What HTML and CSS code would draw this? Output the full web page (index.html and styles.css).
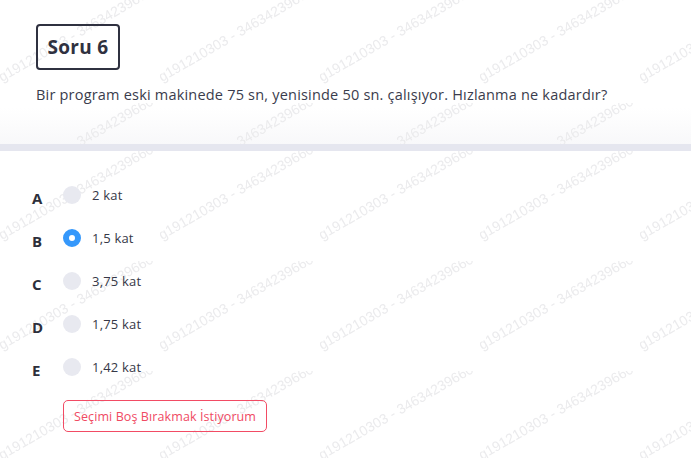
FILE: index.html
```html
<!DOCTYPE html>
<html lang="tr">
<head>
<meta charset="utf-8">
<title>Soru 6</title>
<link rel="stylesheet" href="styles.css">
</head>
<body>
<div class="page">
  <section class="head">
    <svg class="wm" aria-hidden="true">
      <defs>
        <pattern id="wm1" patternUnits="userSpaceOnUse" x="0" y="-7" width="160" height="110">
          <text x="2" y="89" transform="rotate(-30 2 89)" class="wm-text">g191210303 - 34634239660</text>
        </pattern>
      </defs>
      <rect width="100%" height="100%" fill="url(#wm1)"/>
    </svg>
    <div class="head-inner">
      <div class="title">Soru 6</div>
      <p class="question">Bir program eski makinede 75 sn, yenisinde 50 sn. çalışıyor. Hızlanma ne kadardır?</p>
    </div>
  </section>
  <div class="divider"></div>
  <section class="options">
    <svg class="wm" aria-hidden="true">
      <defs>
        <pattern id="wm2" patternUnits="userSpaceOnUse" x="0" y="0" width="160" height="110">
          <text x="2" y="89" transform="rotate(-30 2 89)" class="wm-text">g191210303 - 34634239660</text>
        </pattern>
      </defs>
      <rect width="100%" height="100%" fill="url(#wm2)"/>
    </svg>
    <div class="options-inner">
      <ul class="opts">
        <li class="opt"><span class="letter">A</span><span class="radio"></span><span class="label">2 kat</span></li>
        <li class="opt"><span class="letter">B</span><span class="radio checked"></span><span class="label">1,5 kat</span></li>
        <li class="opt"><span class="letter">C</span><span class="radio"></span><span class="label">3,75 kat</span></li>
        <li class="opt"><span class="letter">D</span><span class="radio"></span><span class="label">1,75 kat</span></li>
        <li class="opt"><span class="letter">E</span><span class="radio"></span><span class="label">1,42 kat</span></li>
      </ul>
      <button class="skip" type="button">Seçimi Boş Bırakmak İstiyorum</button>
    </div>
  </section>
</div>
</body>
</html>
```
FILE: styles.css
```css
html, body {
  margin: 0;
  padding: 0;
  background: #ffffff;
}

body {
  font-family: "Open Sans", "Noto Sans", sans-serif;
  color: #363847;
  width: 691px;
  height: 458px;
  overflow: hidden;
}

.page {
  display: flex;
  flex-direction: column;
}

.head {
  position: relative;
  height: 144px;
  background: linear-gradient(to bottom, #ffffff 0%, #ffffff 75%, #f8f8fa 100%);
}

.wm {
  position: absolute;
  left: 0;
  top: 0;
  width: 100%;
  height: 100%;
  z-index: 0;
}

.wm-text {
  font-family: "Liberation Sans", Arial, sans-serif;
  font-size: 14px;
  fill: #ebebed;
}

.head-inner {
  position: relative;
  z-index: 1;
  padding: 24px 0 0 36px;
  display: flex;
  flex-direction: column;
  align-items: flex-start;
}

.title {
  box-sizing: border-box;
  width: 84px;
  height: 46px;
  border: 2px solid #2f3140;
  border-radius: 4px;
  display: flex;
  align-items: center;
  justify-content: center;
  font-size: 19px;
  font-weight: 700;
  letter-spacing: 0.3px;
  color: #2f3140;
}

.question {
  margin: 14px 0 0;
  font-size: 14.5px;
  line-height: 21px;
  letter-spacing: 0.2px;
  color: #3a3c4c;
}

.divider {
  height: 7px;
  background: #e5e6ef;
}

.options {
  position: relative;
  height: 307px;
}

.options-inner {
  position: relative;
  z-index: 1;
  padding: 22px 0 0 32px;
}

.opts {
  list-style: none;
  margin: 0;
  padding: 0;
}

.opt {
  display: flex;
  align-items: center;
  height: 43px;
}

.letter {
  width: 31px;
  margin-top: 6px;
  font-size: 15px;
  font-weight: 700;
  color: #2d2f3b;
}

.radio {
  box-sizing: border-box;
  width: 18px;
  height: 18px;
  border-radius: 50%;
  background: #e8e9f0;
  flex: none;
}

.radio.checked {
  background: #ffffff;
  border: 6px solid #3598fb;
}

.label {
  margin-left: 11px;
  font-size: 13px;
  letter-spacing: 0.2px;
  color: #363847;
}

.skip {
  margin: 12px 0 0 31px;
  box-sizing: border-box;
  width: 204px;
  height: 32px;
  padding: 0;
  background: transparent;
  border: 1px solid #f24b64;
  border-radius: 5px;
  font-family: inherit;
  font-size: 12.5px;
  letter-spacing: 0.1px;
  color: #f04a63;
}
```
